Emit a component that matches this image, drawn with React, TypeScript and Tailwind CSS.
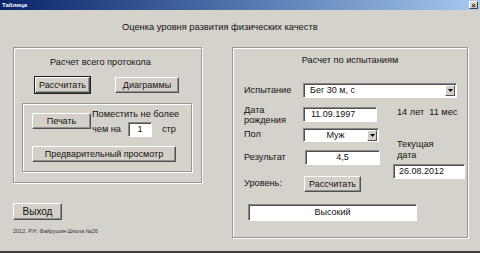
const btn =
  'flex items-center justify-center bg-[#d4d0c8] border border-t-white border-l-white border-r-[#505050] border-b-[#505050] shadow-[inset_-1px_-1px_0_#909090] text-[9px] leading-none'
const field =
  'flex items-center bg-white border border-t-[#888] border-l-[#888] border-r-white border-b-white shadow-[inset_1px_1px_0_#505050] text-[9px] leading-none'
const group = 'border border-[#9c9890] shadow-[inset_1px_1px_0_#fff,1px_1px_0_#fff]'

function DropArrow() {
  return (
    <div className="ml-auto mr-[1px] flex h-[11px] w-[10px] items-center justify-center border border-t-white border-l-white border-r-[#505050] border-b-[#505050] bg-[#d4d0c8]">
      <svg width="5" height="3" viewBox="0 0 5 3">
        <path d="M0 0h5L2.5 3z" fill="#000" />
      </svg>
    </div>
  )
}

export default function App() {
  return (
    <div className="flex h-[253px] w-[480px] flex-col overflow-hidden bg-[#d5d2cb] font-['Liberation_Sans',Arial,sans-serif] text-[9.2px] leading-none text-[#111]">
      {/* title bar */}
      <div className="flex h-[10px] items-center justify-between bg-gradient-to-r from-[#0a246a] to-[#a6caf0] pl-[2px] pr-[2px]">
        <span className="text-[6px] font-bold text-white">Таблица</span>
        <div className="flex h-[8px] w-[9px] items-center justify-center border border-t-white border-l-white border-r-[#404040] border-b-[#404040] bg-[#d4d0c8] text-[7px] font-bold">
          ×
        </div>
      </div>

      <div className="flex flex-1 flex-col border-b-2 border-[#404040]">
        <div className="mt-[11px] h-[12px] pl-[122px] text-[9.3px] leading-[12px]">
          Оценка уровня развития физических качеств
        </div>

        <div className="mt-[14px] flex items-start">
          {/* left column */}
          <div className="ml-[13px] flex w-[189px] flex-col">
            <div className={`${group} flex h-[136px] flex-col`}>
              <div className="mt-[8px] h-[12px] pl-[36px] leading-[12px]">Расчет всего протокола</div>
              <div className="mt-[9px] flex pl-[21px]">
                <div className={`${btn} h-[16px] w-[55px] outline outline-1 outline-[#222]`}>Рассчитать</div>
                <div className={`${btn} ml-[25px] h-[16px] w-[64px]`}>Диаграммы</div>
              </div>
              <div className={`${group} ml-[8px] mt-[10px] flex h-[69px] w-[170px] flex-col`}>
                <div className="flex items-start">
                  <div className={`${btn} ml-[9px] mt-[9px] h-[16px] w-[59px]`}>Печать</div>
                  <div className="ml-[1px] mt-[4px] flex flex-col">
                    <div className="h-[12px] leading-[12px]">Поместить не более</div>
                    <div className="mt-[2px] flex h-[15px] items-center">
                      <span className="w-[36px]">чем на</span>
                      <div className={`${field} h-[15px] w-[24px] justify-center`}>1</div>
                      <span className="ml-[10px]">стр</span>
                    </div>
                  </div>
                </div>
                <div className={`${btn} ml-[9px] mt-[9px] h-[16px] w-[144px]`}>Предварительный просмотр</div>
              </div>
            </div>
            <div className={`${btn} mt-[20px] h-[17px] w-[49px] text-[10px]`}>Выход</div>
            <div className="mt-[9px] text-[5.5px] text-[#333]">2012. Р.Н. Файрушин Школа №26</div>
          </div>

          {/* right frame */}
          <div className={`${group} ml-[30px] flex h-[191px] w-[236px] flex-col`}>
            <div className="mt-[6px] h-[12px] text-center leading-[12px]">Расчет по испытаниям</div>
            <div className="mt-[17px] flex h-[15px] items-center pl-[11px]">
              <span className="w-[59px]">Испытание</span>
              <div className={`${field} h-[15px] w-[154px] pl-[6px]`}>
                Бег 30 м, с
                <DropArrow />
              </div>
            </div>

            <div className="mt-[9px] flex items-start">
              <div className="flex flex-col pl-[11px]">
                <div className="flex h-[15px] items-center">
                  <span className="w-[59px] leading-[10px]">
                    Дата
                    <br />
                    рождения
                  </span>
                  <div className={`${field} h-[15px] w-[74px] pl-[7px]`}>11.09.1997</div>
                </div>
                <div className="mt-[6px] flex h-[14px] items-center">
                  <span className="w-[59px]">Пол</span>
                  <div className={`${field} h-[14px] w-[76px]`}>
                    <span className="flex-1 text-center">Муж</span>
                    <DropArrow />
                  </div>
                </div>
                <div className="mt-[8px] flex h-[15px] items-center">
                  <span className="w-[61px]">Результат</span>
                  <div className={`${field} h-[15px] w-[75px] justify-center`}>4,5</div>
                </div>
                <div className="mt-[11px] flex h-[16px] items-center">
                  <span className="w-[60px]">Уровень:</span>
                  <div className={`${btn} h-[16px] w-[57px]`}>Рассчитать</div>
                </div>
              </div>

              <div className="ml-[13px] flex flex-col">
                <div className="h-[10px] whitespace-pre pl-[4px] leading-[10px]">14 лет  11 мес</div>
                <div className="mt-[22px] pl-[4px] leading-[11px]">
                  Текущая
                  <br />
                  дата
                </div>
                <div className={`${field} mt-[3px] h-[15px] w-[72px] pl-[5px]`}>26.08.2012</div>
              </div>
            </div>

            <div className={`${field} ml-[15px] mt-[12px] h-[17px] w-[169px] justify-center`}>Высокий</div>
          </div>
        </div>
      </div>
    </div>
  )
}
